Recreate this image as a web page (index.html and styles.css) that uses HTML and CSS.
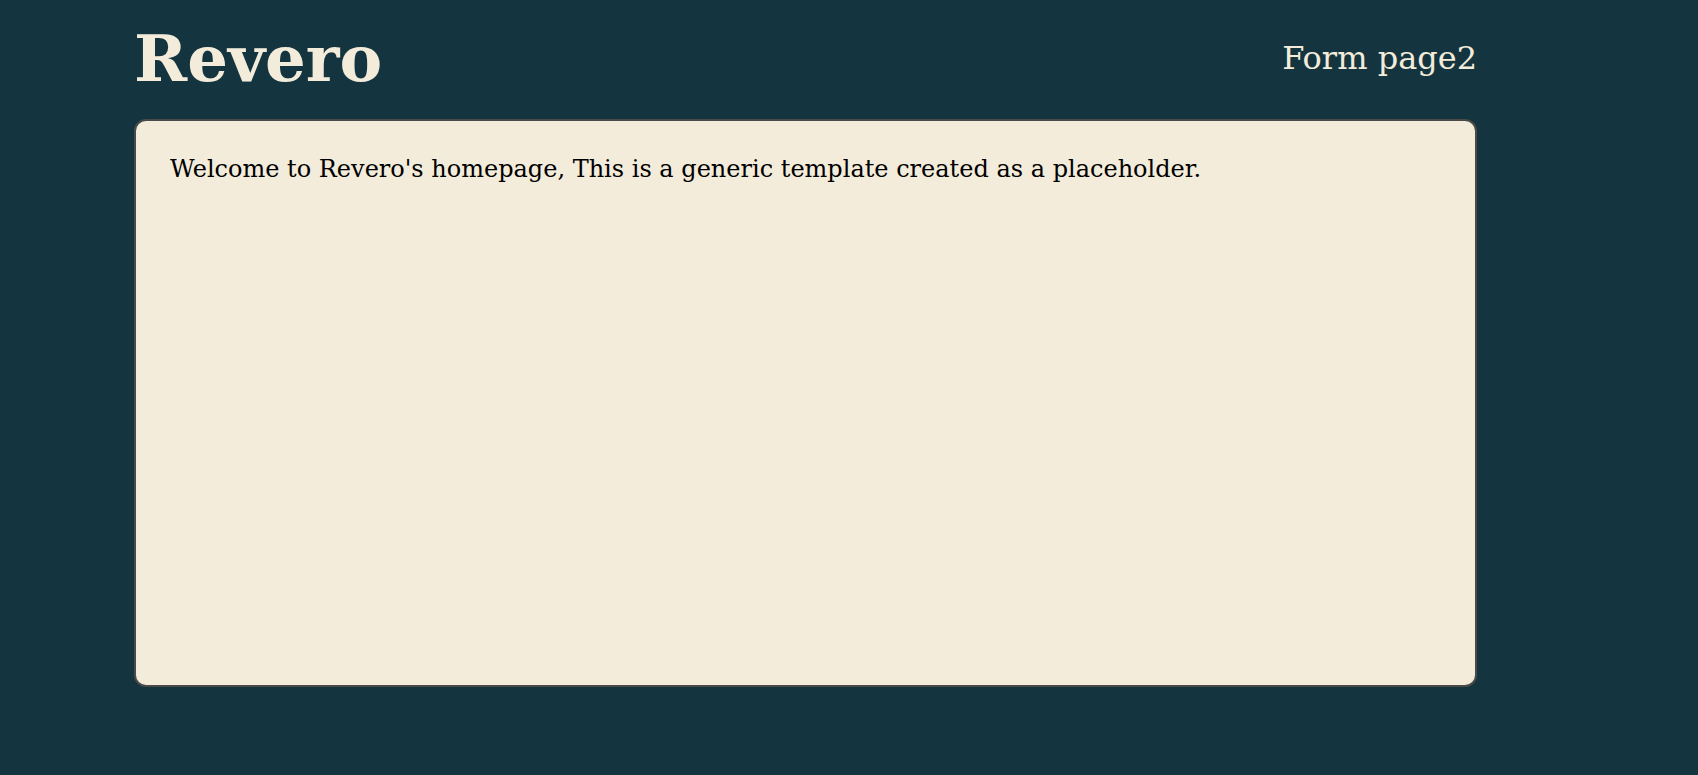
FILE: index.html
```html
<!DOCTYPE html>
<html>
<head>
<meta charset="utf-8">
<link rel="stylesheet" href="styles.css">
</head>
<body>
<div class="page">
  <header class="header">
    <h1 class="title">Revero</h1>
    <div class="nav">Form page2</div>
  </header>
  <main class="card">
    <p class="text">Welcome to Revero's homepage, This is a generic template created as a placeholder.</p>
  </main>
</div>
</body>
</html>
```
FILE: styles.css
```css
html, body {
  margin: 0;
  padding: 0;
  background: #143540;
}
body {
  font-family: "DejaVu Serif", serif;
  height: 775px;
}
.page {
  margin-left: 134px;
  width: 1343px;
}
.header {
  display: flex;
  justify-content: space-between;
  align-items: center;
  padding-top: 21px;
}
.title {
  margin: 0;
  font-size: 64px;
  font-weight: bold;
  color: #f3ecda;
}
.nav {
  font-size: 32px;
  color: #f3ecda;
  padding-bottom: 2px;
}
.card {
  margin-top: 23px;
  box-sizing: border-box;
  height: 568px;
  background: #f3ecda;
  border: 2px solid #4a4a48;
  border-radius: 12px;
  padding: 34px 34px;
}
.text {
  margin: 0;
  font-size: 24px;
  color: #000;
}
```
